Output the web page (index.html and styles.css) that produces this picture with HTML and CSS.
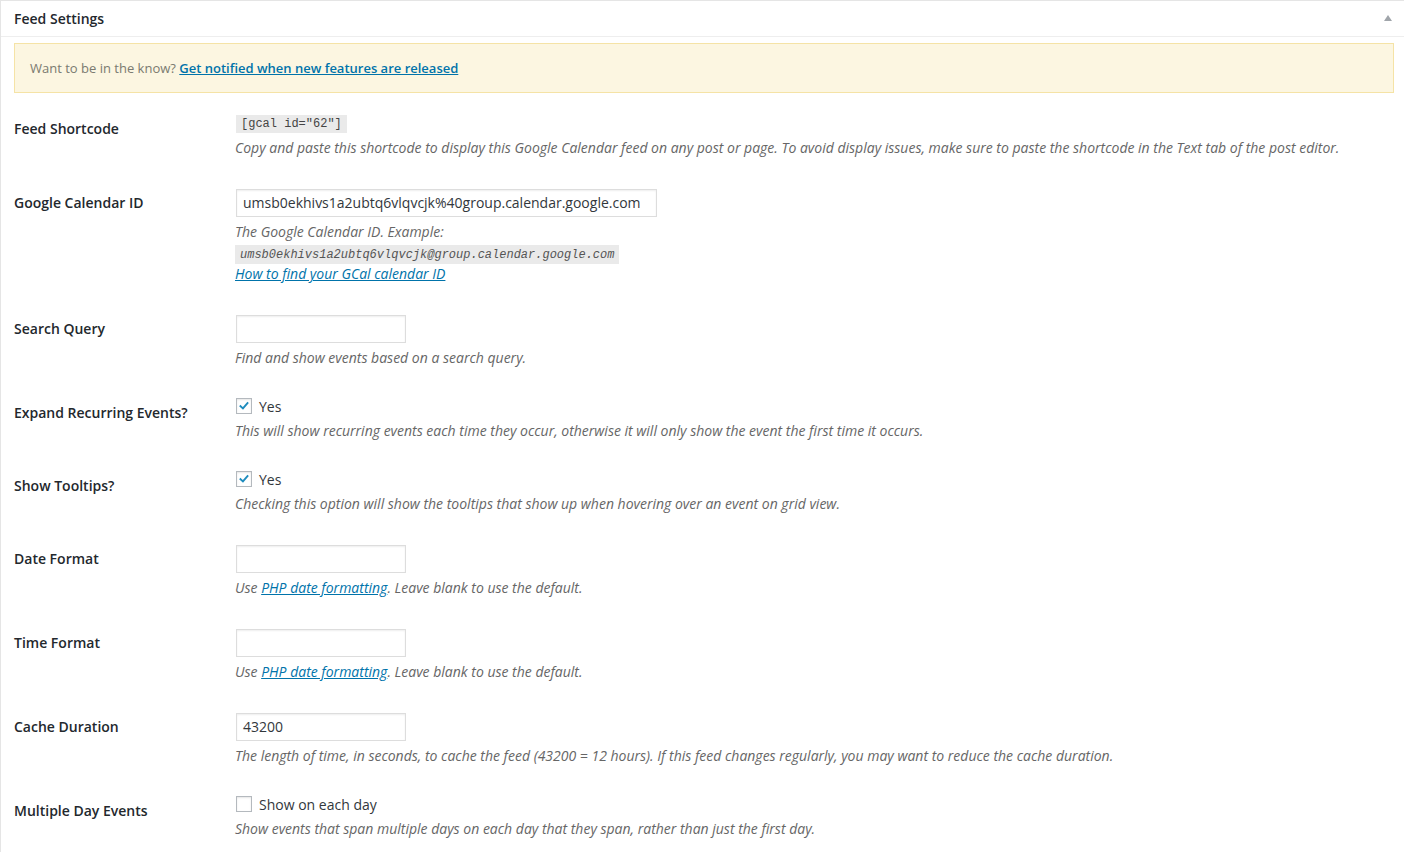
FILE: index.html
```html
<!DOCTYPE html>
<html lang="en">
<head>
<meta charset="utf-8">
<title>Feed Settings</title>
<link rel="stylesheet" href="styles.css">
</head>
<body>
<div class="postbox">
  <div class="hndle">
    <h2 class="hndle-title">Feed Settings</h2>
    <span class="toggle-arrow"></span>
  </div>
  <div class="inside">
    <div class="notice">Want to be in the know? <a href="#">Get notified when new features are released</a></div>
    <div class="form-table">
      <div class="row">
        <div class="th">Feed Shortcode</div>
        <div class="td td-code">
          <div class="code-line"><code class="shortcode">[gcal id="62"]</code></div>
          <p class="description">Copy and paste this shortcode to display this Google Calendar feed on any post or page. To avoid display issues, make sure to paste the shortcode in the Text tab of the post editor.</p>
        </div>
      </div>
      <div class="row">
        <div class="th">Google Calendar ID</div>
        <div class="td td-gcal">
          <div class="input wide">umsb0ekhivs1a2ubtq6vlqvcjk%40group.calendar.google.com</div>
          <p class="description">The Google Calendar ID. Example:<br><code class="example">umsb0ekhivs1a2ubtq6vlqvcjk@group.calendar.google.com</code><br><a href="#">How to find your GCal calendar ID</a></p>
        </div>
      </div>
      <div class="row">
        <div class="th">Search Query</div>
        <div class="td td-input">
          <div class="input small"></div>
          <p class="description">Find and show events based on a search query.</p>
        </div>
      </div>
      <div class="row">
        <div class="th">Expand Recurring Events?</div>
        <div class="td td-check">
          <div class="check-line"><span class="checkbox"><svg viewBox="0 0 16 16" width="16" height="16"><path d="M4 8.2 L6.8 10.8 L12 4.8" fill="none" stroke="#1e8cbe" stroke-width="2.2" stroke-linecap="square"/></svg></span>Yes</div>
          <p class="description">This will show recurring events each time they occur, otherwise it will only show the event the first time it occurs.</p>
        </div>
      </div>
      <div class="row">
        <div class="th">Show Tooltips?</div>
        <div class="td td-check">
          <div class="check-line"><span class="checkbox"><svg viewBox="0 0 16 16" width="16" height="16"><path d="M4 8.2 L6.8 10.8 L12 4.8" fill="none" stroke="#1e8cbe" stroke-width="2.2" stroke-linecap="square"/></svg></span>Yes</div>
          <p class="description">Checking this option will show the tooltips that show up when hovering over an event on grid view.</p>
        </div>
      </div>
      <div class="row">
        <div class="th">Date Format</div>
        <div class="td td-input">
          <div class="input small"></div>
          <p class="description">Use <a href="#">PHP date formatting</a>. Leave blank to use the default.</p>
        </div>
      </div>
      <div class="row">
        <div class="th">Time Format</div>
        <div class="td td-input">
          <div class="input small"></div>
          <p class="description">Use <a href="#">PHP date formatting</a>. Leave blank to use the default.</p>
        </div>
      </div>
      <div class="row">
        <div class="th">Cache Duration</div>
        <div class="td td-input">
          <div class="input small">43200</div>
          <p class="description">The length of time, in seconds, to cache the feed (43200 = 12 hours). If this feed changes regularly, you may want to reduce the cache duration.</p>
        </div>
      </div>
      <div class="row">
        <div class="th">Multiple Day Events</div>
        <div class="td td-check">
          <div class="check-line"><span class="checkbox"></span>Show on each day</div>
          <p class="description">Show events that span multiple days on each day that they span, rather than just the first day.</p>
        </div>
      </div>
    </div>
  </div>
</div>
</body>
</html>
```
FILE: styles.css
```css
html, body {
  margin: 0;
  padding: 0;
  background: #fff;
  overflow: hidden;
}
body {
  font-family: "Open Sans", "Noto Sans", sans-serif;
  font-size: 14px;
  color: #444;
}
.postbox {
  border-top: 1px solid #e5e5e5;
  border-left: 1px solid #e5e5e5;
  background: #fff;
}
.hndle {
  height: 35px;
  display: flex;
  align-items: center;
  justify-content: space-between;
  padding: 0 12px 0 13px;
  border-bottom: 1px solid #eee;
}
.hndle-title {
  margin: 0;
  font-size: 14px;
  font-weight: 600;
  line-height: 18px;
  color: #23282d;
}
.toggle-arrow {
  width: 0;
  height: 0;
  border-left: 4px solid transparent;
  border-right: 4px solid transparent;
  border-bottom: 6px solid #a0a5aa;
  margin-top: -1px;
}
.inside {
  padding: 6px 10px 12px 13px;
}
.notice {
  background: #fcf6e1;
  border: 1px solid #f5e3a6;
  padding: 14px 15px;
  line-height: 20px;
  font-size: 13px;
  color: #7a7a70;
}
a {
  color: #0073aa;
  text-decoration: underline;
}
.notice a {
  font-weight: 600;
}
.form-table {
  margin-top: 7px;
}
.row {
  display: grid;
  grid-template-columns: 222px 1fr;
}
.th {
  padding: 20px 0 0;
  line-height: 18px;
  font-weight: 600;
  color: #23282d;
}
.td {
  padding: 15px 0 15px 0;
  margin-left: -1px;
}
.td-code {
  padding-bottom: 16px;
}
.td-input {
  padding-bottom: 16px;
}
.td-gcal {
  padding-bottom: 16px;
}
.td-check {
  padding-top: 13px;
  padding-bottom: 16px;
}
.td-check .description {
  margin-top: 5px;
}
.code-line {
  display: flex;
  align-items: flex-start;
  height: 18px;
  padding-left: 1px;
}
code {
  font-family: "Liberation Mono", "DejaVu Sans Mono", monospace;
  background: #eaeaea;
  color: #444;
}
.shortcode {
  display: block;
  font-size: 12px;
  line-height: 13px;
  padding: 3px 5px 2px;
}
.example {
  font-size: 12px;
  line-height: 13px;
  font-style: italic;
  padding: 3px 5px 2px;
  color: #555;
}
.description {
  margin: 4px 0 0;
  line-height: 21px;
  font-style: italic;
  color: #666;
}
.input {
  box-sizing: border-box;
  height: 28px;
  margin-left: 1px;
  border: 1px solid #ddd;
  box-shadow: inset 0 1px 2px rgba(0, 0, 0, 0.07);
  background: #fff;
  padding: 0 6px;
  line-height: 26px;
  color: #32373c;
}
.input.wide {
  width: 421px;
}
.input.small {
  width: 170px;
}
.check-line {
  display: flex;
  align-items: center;
  height: 18px;
  padding-left: 1px;
  color: #32373c;
}
.checkbox {
  box-sizing: border-box;
  width: 16px;
  height: 16px;
  border: 1px solid #b4b9be;
  background: #fff;
  box-shadow: inset 0 1px 2px rgba(0, 0, 0, 0.1);
  margin-right: 7px;
  display: inline-flex;
  align-items: center;
  justify-content: center;
}
.checkbox svg {
  display: block;
}
```
